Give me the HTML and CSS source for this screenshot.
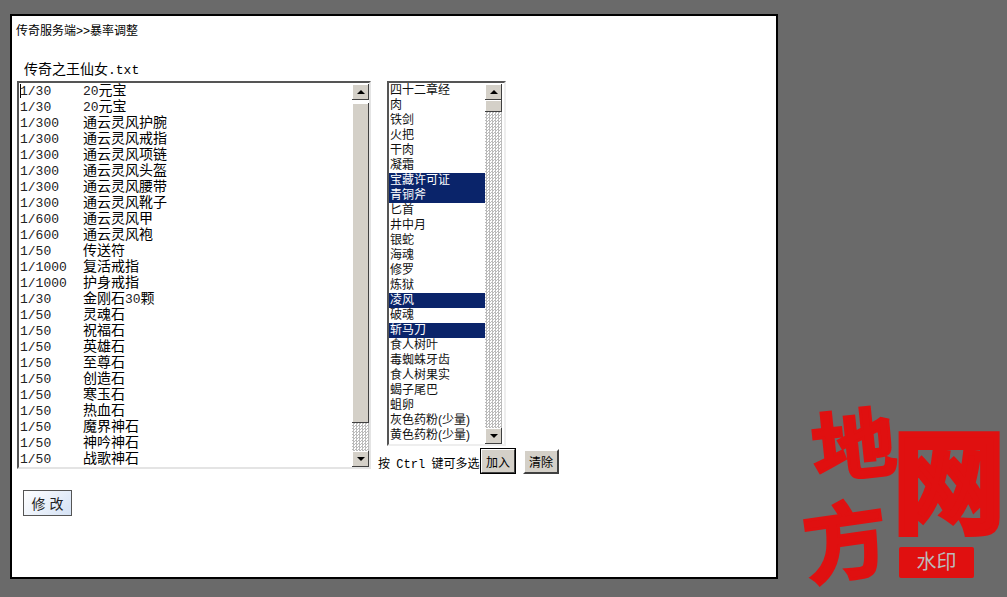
FILE: index.html
```html
<!DOCTYPE html>
<html>
    <head>
        <meta charset="utf-8">
        <title>暴率调整</title>
        <link rel="stylesheet" href="styles.css">
    </head>
    <body>
        <div id="panel">
            <div class="crumb">传奇服务端&gt;&gt;暴率调整</div>
            <div class="fileName">传奇之王仙女<span class="ext">.txt</span></div>
            <div class="editRow">
                <div class="listBox dropList">
                    <div class="rows">
                        <div class="dropRow"><i class="caret"></i><span class="rate">1/30</span><span><span class="num">20</span>元宝</span></div>
                        <div class="dropRow"><span class="rate">1/30</span><span><span class="num">20</span>元宝</span></div>
                        <div class="dropRow"><span class="rate">1/300</span><span>通云灵风护腕</span></div>
                        <div class="dropRow"><span class="rate">1/300</span><span>通云灵风戒指</span></div>
                        <div class="dropRow"><span class="rate">1/300</span><span>通云灵风项链</span></div>
                        <div class="dropRow"><span class="rate">1/300</span><span>通云灵风头盔</span></div>
                        <div class="dropRow"><span class="rate">1/300</span><span>通云灵风腰带</span></div>
                        <div class="dropRow"><span class="rate">1/300</span><span>通云灵风靴子</span></div>
                        <div class="dropRow"><span class="rate">1/600</span><span>通云灵风甲</span></div>
                        <div class="dropRow"><span class="rate">1/600</span><span>通云灵风袍</span></div>
                        <div class="dropRow"><span class="rate">1/50</span><span>传送符</span></div>
                        <div class="dropRow"><span class="rate">1/1000</span><span>复活戒指</span></div>
                        <div class="dropRow"><span class="rate">1/1000</span><span>护身戒指</span></div>
                        <div class="dropRow"><span class="rate">1/30</span><span>金刚石<span class="num">30</span>颗</span></div>
                        <div class="dropRow"><span class="rate">1/50</span><span>灵魂石</span></div>
                        <div class="dropRow"><span class="rate">1/50</span><span>祝福石</span></div>
                        <div class="dropRow"><span class="rate">1/50</span><span>英雄石</span></div>
                        <div class="dropRow"><span class="rate">1/50</span><span>至尊石</span></div>
                        <div class="dropRow"><span class="rate">1/50</span><span>创造石</span></div>
                        <div class="dropRow"><span class="rate">1/50</span><span>寒玉石</span></div>
                        <div class="dropRow"><span class="rate">1/50</span><span>热血石</span></div>
                        <div class="dropRow"><span class="rate">1/50</span><span>魔界神石</span></div>
                        <div class="dropRow"><span class="rate">1/50</span><span>神吟神石</span></div>
                        <div class="dropRow"><span class="rate">1/50</span><span>战歌神石</span></div>
                    </div>
                    <div class="scrollBar">
                        <div class="arrow up"></div>
                        <div class="thumb longThumb"></div>
                        <div class="track"></div>
                        <div class="arrow down"></div>
                    </div>
                </div>
                <div class="pickColumn">
                    <div class="listBox itemList">
                        <div class="rows">
                            <div class="itemRow">四十二章经</div>
                            <div class="itemRow">肉</div>
                            <div class="itemRow">铁剑</div>
                            <div class="itemRow">火把</div>
                            <div class="itemRow">干肉</div>
                            <div class="itemRow">凝霜</div>
                            <div class="itemRow selected">宝藏许可证</div>
                            <div class="itemRow selected">青铜斧</div>
                            <div class="itemRow">匕首</div>
                            <div class="itemRow">井中月</div>
                            <div class="itemRow">银蛇</div>
                            <div class="itemRow">海魂</div>
                            <div class="itemRow">修罗</div>
                            <div class="itemRow">炼狱</div>
                            <div class="itemRow selected">凌风</div>
                            <div class="itemRow">破魂</div>
                            <div class="itemRow selected">斩马刀</div>
                            <div class="itemRow">食人树叶</div>
                            <div class="itemRow">毒蜘蛛牙齿</div>
                            <div class="itemRow">食人树果实</div>
                            <div class="itemRow">蝎子尾巴</div>
                            <div class="itemRow">蛆卵</div>
                            <div class="itemRow">灰色药粉(少量)</div>
                            <div class="itemRow">黄色药粉(少量)</div>
                        </div>
                        <div class="scrollBar">
                            <div class="arrow up"></div>
                            <div class="thumb shortThumb"></div>
                            <div class="track"></div>
                            <div class="arrow down"></div>
                        </div>
                    </div>
                    <div class="pickActions">
                        <span class="hint">按 <span class="ext">Ctrl</span> 键可多选</span>
                        <button class="grayButton focused">加入</button>
                        <button class="grayButton">清除</button>
                    </div>
                </div>
            </div>
            <button class="saveButton">修 改</button>
        </div>
        <div id="watermark">
            <span class="markChar di">地</span>
            <span class="markChar fang">方</span>
            <span class="markChar wang">网</span>
            <span class="markBadge">水印</span>
        </div>
    </body>
</html>
```

FILE: styles.css
```css
html, body {
    height: 100%;
}

body {
    margin: 0;
    padding: 14px 0 0 10px;
    box-sizing: border-box;
    overflow: hidden;
    background-color: #6a6a6a;
    font-family: "Liberation Sans", "Noto Sans CJK SC", sans-serif;
    font-size: 12px;
    color: #000;
}

#panel {
    box-sizing: border-box;
    width: 768px;
    height: 565px;
    padding: 7px 0 0 4px;
    background-color: #fff;
    border: 2px solid #000;
}

.crumb {
    line-height: 16px;
}

.fileName {
    margin: 22px 0 0 8px;
    font-size: 14px;
    line-height: 16px;
}

.fileName .ext {
    font-size: 13px;
}

.ext {
    font-family: "Liberation Mono", monospace;
    font-size: 12px;
}

.editRow {
    display: flex;
    align-items: flex-start;
    margin-top: 2px;
    margin-left: 1px;
}

.listBox {
    display: flex;
    box-sizing: border-box;
    border: 2px solid;
    border-color: #555 #e4e4e4 #e4e4e4 #555;
}

.rows {
    flex: 1;
    overflow: hidden;
}

.dropList {
    width: 354px;
    height: 388px;
}

.dropRow {
    display: flex;
    align-items: baseline;
    height: 16px;
    line-height: 15px;
    padding-left: 1px;
    font-size: 14px;
    white-space: nowrap;
}

.caret {
    flex: none;
    align-self: flex-start;
    width: 1px;
    height: 14px;
    margin: 1px -1px 0 0;
    background-color: #000;
}

.rate {
    width: 63px;
    font-family: "Liberation Mono", monospace;
    font-size: 13px;
    color: #222;
}

.num {
    font-family: "Liberation Mono", monospace;
    font-size: 13px;
    color: #222;
}

.pickColumn {
    display: flex;
    flex-direction: column;
    margin-left: 15px;
}

.itemList {
    width: 119px;
    height: 365px;
    margin-left: 1px;
    padding-right: 2px;
    border-color: #555 #eee #eee #555;
}

.itemRow {
    height: 15px;
    line-height: 15px;
    padding-left: 1px;
    color: #111;
    white-space: nowrap;
}

.selected {
    background-color: #0a246a;
    color: #fff;
}

.scrollBar {
    display: flex;
    flex-direction: column;
    flex: none;
    width: 17px;
    padding-top: 1px;
    box-sizing: border-box;
}

.arrow {
    display: flex;
    align-items: center;
    justify-content: center;
    flex: none;
    height: 16px;
    background-color: #d4d0c8;
    box-shadow: inset -1px -1px #404040, inset 1px 1px #fff;
}

.arrow::before {
    content: "";
    border-left: 4px solid transparent;
    border-right: 4px solid transparent;
}

.up::before {
    border-bottom: 4px solid #000;
}

.down::before {
    border-top: 4px solid #000;
}

.thumb {
    flex: none;
    background-color: #d4d0c8;
    box-shadow: inset -1px -1px #404040, inset 1px 1px #fff;
}

.longThumb {
    height: 320px;
    margin-top: 3px;
}

.shortThumb {
    height: 12px;
}

/* checker pattern of the old scrollbar track */
.track {
    flex: 1;
    background-color: #fff;
    background-image: conic-gradient(#bbb 25%, #fff 0 50%, #bbb 0 75%, #fff 0);
    background-size: 3px 3px;
}

.pickActions {
    display: flex;
    align-items: flex-end;
    margin-top: 2px;
    margin-left: -8px;
}

.hint {
    width: 102px;
    line-height: 14px;
    margin-bottom: 2px;
    word-spacing: 3px;
    white-space: nowrap;
}

.grayButton {
    box-sizing: border-box;
    width: 36px;
    height: 25px;
    padding: 0;
    margin-right: 7px;
    background-color: #d4d0c8;
    border: 2px solid;
    border-color: #fff #404040 #404040 #fff;
    font: inherit;
    color: #000;
}

.focused {
    height: 26px;
    outline: 1px solid #000;
    outline-offset: -1px;
}

.saveButton {
    box-sizing: border-box;
    display: block;
    width: 49px;
    height: 26px;
    margin: 16px 0 0 7px;
    padding: 0;
    background-image: linear-gradient(135deg, #fff, #d5e2f5);
    border: 1px solid #555;
    font: inherit;
    font-size: 14px;
    color: #222;
}

#watermark {
    position: absolute;
    left: 800px;
    top: 400px;
    width: 207px;
    height: 197px;
}

.markChar {
    position: absolute;
    font-family: "Liberation Sans", "Noto Sans CJK SC", sans-serif;
    font-weight: 700;
    color: #e01010;
    -webkit-text-stroke: 3px #e01010;
    line-height: 1;
}

.di {
    left: 12px;
    top: 5px;
    font-size: 84px;
    transform: rotate(-6deg) scaleY(0.9);
}

.fang {
    left: 4px;
    top: 102px;
    font-size: 84px;
    transform: rotate(-8deg);
}

.wang {
    left: 93px;
    top: 30px;
    font-size: 112px;
    -webkit-text-stroke: 6px #e01010;
}

.markBadge {
    position: absolute;
    left: 99px;
    top: 147px;
    width: 75px;
    height: 31px;
    border-radius: 2px;
    background-color: #e01010;
    color: #bbb;
    font-size: 20px;
    line-height: 31px;
    text-align: center;
    white-space: nowrap;
}
```
